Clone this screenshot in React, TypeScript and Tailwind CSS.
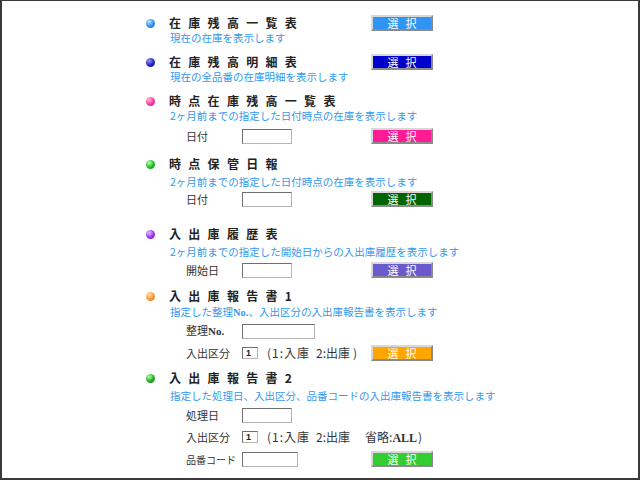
import React from 'react';

const FONT = "font-['Noto_Sans_CJK_JP',sans-serif]";

function Bullet({ className }: { className: string }) {
  return <span className={`block h-[9px] w-[9px] shrink-0 rounded-full ${className}`} />;
}

function SelectButton({ className }: { className: string }) {
  return (
    <button
      type="button"
      className={`flex h-[16px] w-[62px] shrink-0 items-center justify-center border-2 border-t-[#d8d8d8] border-l-[#d8d8d8] border-r-[#8a8a8a] border-b-[#8a8a8a] pl-[7px] text-[11px] leading-none tracking-[7px] text-white ${className}`}
    >
      選択
    </button>
  );
}

function TextBox({ className }: { className: string }) {
  return (
    <input
      type="text"
      className={`h-[15px] shrink-0 border border-t-[#6f6f6f] border-l-[#6f6f6f] border-r-[#b5b5b5] border-b-[#b5b5b5] bg-white outline-none ${className}`}
    />
  );
}

function SmallBox() {
  return (
    <div className="flex h-[12px] w-[16px] shrink-0 items-center border border-t-[#6f6f6f] border-l-[#6f6f6f] border-r-[#b5b5b5] border-b-[#b5b5b5] pl-[3px] font-['Liberation_Sans',sans-serif] text-[9px] font-bold leading-none text-[#222]">
      1
    </div>
  );
}

function TitleRow({
  bullet,
  title,
  button,
  className,
}: {
  bullet: string;
  title: React.ReactNode;
  button?: string;
  className: string;
}) {
  return (
    <div className={`flex h-[16px] items-center ${className}`}>
      <Bullet className={bullet} />
      <div className="ml-[14px] w-[202px] shrink-0 text-[12px] font-bold leading-none tracking-[7.3px] text-[#222]">
        {title}
      </div>
      {button && <SelectButton className={button} />}
    </div>
  );
}

function Sub({ children, className }: { children: React.ReactNode; className: string }) {
  return (
    <div className={`ml-[24px] h-[14px] whitespace-nowrap text-[10.5px] leading-[14px] text-[#3399ee] ${className}`}>
      {children}
    </div>
  );
}

function FieldRow({
  label,
  children,
  button,
  className,
}: {
  label: React.ReactNode;
  children: React.ReactNode;
  button?: string;
  className: string;
}) {
  return (
    <div className={`flex h-[16px] items-center ${className}`}>
      <div className="ml-[40px] w-[56px] shrink-0 whitespace-nowrap text-[11px] leading-none text-[#333]">{label}</div>
      <div className="flex w-[129px] shrink-0 items-center whitespace-nowrap">{children}</div>
      {button && <SelectButton className={button} />}
    </div>
  );
}

function KubunNote({ all }: { all?: boolean }) {
  return (
    <span className="ml-[9px] flex items-center text-[12px] leading-none text-[#333]">
      <span className="tracking-[1px]">(1:入庫</span>
      <span className="ml-[6px]">2:出庫</span>
      {all && (
        <span className="ml-[15px]">
          省略:<span className="font-['Liberation_Serif',serif] font-bold">ALL</span>
        </span>
      )}
      <span className={all ? 'ml-px' : 'ml-[3px]'}>)</span>
    </span>
  );
}

export default function App() {
  return (
    <div
      className={`h-[480px] w-[640px] overflow-hidden border-t border-l-2 border-r-2 border-b-2 border-[#3a3a3a] bg-white pl-[144px] ${FONT}`}
    >
      {/* 在庫残高一覧表 */}
      <TitleRow
        className="mt-[14px]"
        bullet="bg-[radial-gradient(circle_at_35%_30%,#bfe3ff,#2f8ff0_55%,#1a6cc8)]"
        title="在庫残高一覧表"
        button="bg-[#2f95f5]"
      />
      <Sub className="">現在の在庫を表示します</Sub>

      {/* 在庫残高明細表 */}
      <TitleRow
        className="mt-[9px]"
        bullet="bg-[radial-gradient(circle_at_35%_30%,#9a9aff,#2020c0_55%,#10108a)]"
        title="在庫残高明細表"
        button="bg-[#0000cc]"
      />
      <Sub className="">現在の全品番の在庫明細を表示します</Sub>

      {/* 時点在庫残高一覧表 */}
      <TitleRow
        className="mt-[9px]"
        bullet="bg-[radial-gradient(circle_at_35%_30%,#ffc0dd,#ff3399_55%,#d01070)]"
        title="時点在庫残高一覧表"
      />
      <Sub className="">2ヶ月前までの指定した日付時点の在庫を表示します</Sub>
      <FieldRow className="mt-[5px]" label="日付" button="bg-[#ff1a96]">
        <TextBox className="w-[50px]" />
      </FieldRow>

      {/* 時点保管日報 */}
      <TitleRow
        className="mt-[12px]"
        bullet="bg-[radial-gradient(circle_at_35%_30%,#b8ffb0,#22bb22_55%,#0e8a0e)]"
        title="時点保管日報"
      />
      <Sub className="mt-[3px]">2ヶ月前までの指定した日付時点の在庫を表示します</Sub>
      <FieldRow className="mt-[2px]" label="日付" button="bg-[#006400]">
        <TextBox className="w-[50px]" />
      </FieldRow>

      {/* 入出庫履歴表 */}
      <TitleRow
        className="mt-[19px]"
        bullet="bg-[radial-gradient(circle_at_35%_30%,#e6c0ff,#9933ee_55%,#6a14b8)]"
        title="入出庫履歴表"
      />
      <Sub className="mt-[3px]">2ヶ月前までの指定した開始日からの入出庫履歴を表示します</Sub>
      <FieldRow className="mt-[3px]" label="開始日" button="bg-[#6a5acd]">
        <TextBox className="w-[50px]" />
      </FieldRow>

      {/* 入出庫報告書1 */}
      <TitleRow
        className="mt-[10px]"
        bullet="bg-[radial-gradient(circle_at_35%_30%,#ffe0b0,#ff9933_55%,#d06a10)]"
        title="入出庫報告書1"
      />
      <Sub className="mt-[1px]">
        指定した整理<span className="font-['Liberation_Serif',serif] font-bold">No.</span>、入出区分の入出庫報告書を表示します
      </Sub>
      <FieldRow
        className="mt-[4px]"
        label={
          <>
            整理<span className="font-['Liberation_Serif',serif] font-bold">No.</span>
          </>
        }
      >
        <TextBox className="w-[73px]" />
      </FieldRow>
      <FieldRow className="mt-[6px]" label="入出区分" button="bg-[#ffa500]">
        <SmallBox />
        <KubunNote />
      </FieldRow>

      {/* 入出庫報告書2 */}
      <TitleRow
        className="mt-[9px]"
        bullet="bg-[radial-gradient(circle_at_35%_30%,#b8ffb0,#22aa22_55%,#0b7a0b)]"
        title="入出庫報告書2"
      />
      <Sub className="mt-[3px]">指定した処理日、入出区分、品番コードの入出庫報告書を表示します</Sub>
      <FieldRow className="mt-[4px]" label="処理日">
        <TextBox className="w-[50px]" />
      </FieldRow>
      <FieldRow className="mt-[6px]" label="入出区分">
        <SmallBox />
        <KubunNote all />
      </FieldRow>
      <FieldRow
        className="mt-[6px]"
        label={<span className="text-[10px]">品番コード</span>}
        button="bg-[#33cc33]"
      >
        <TextBox className="w-[56px]" />
      </FieldRow>
    </div>
  );
}
